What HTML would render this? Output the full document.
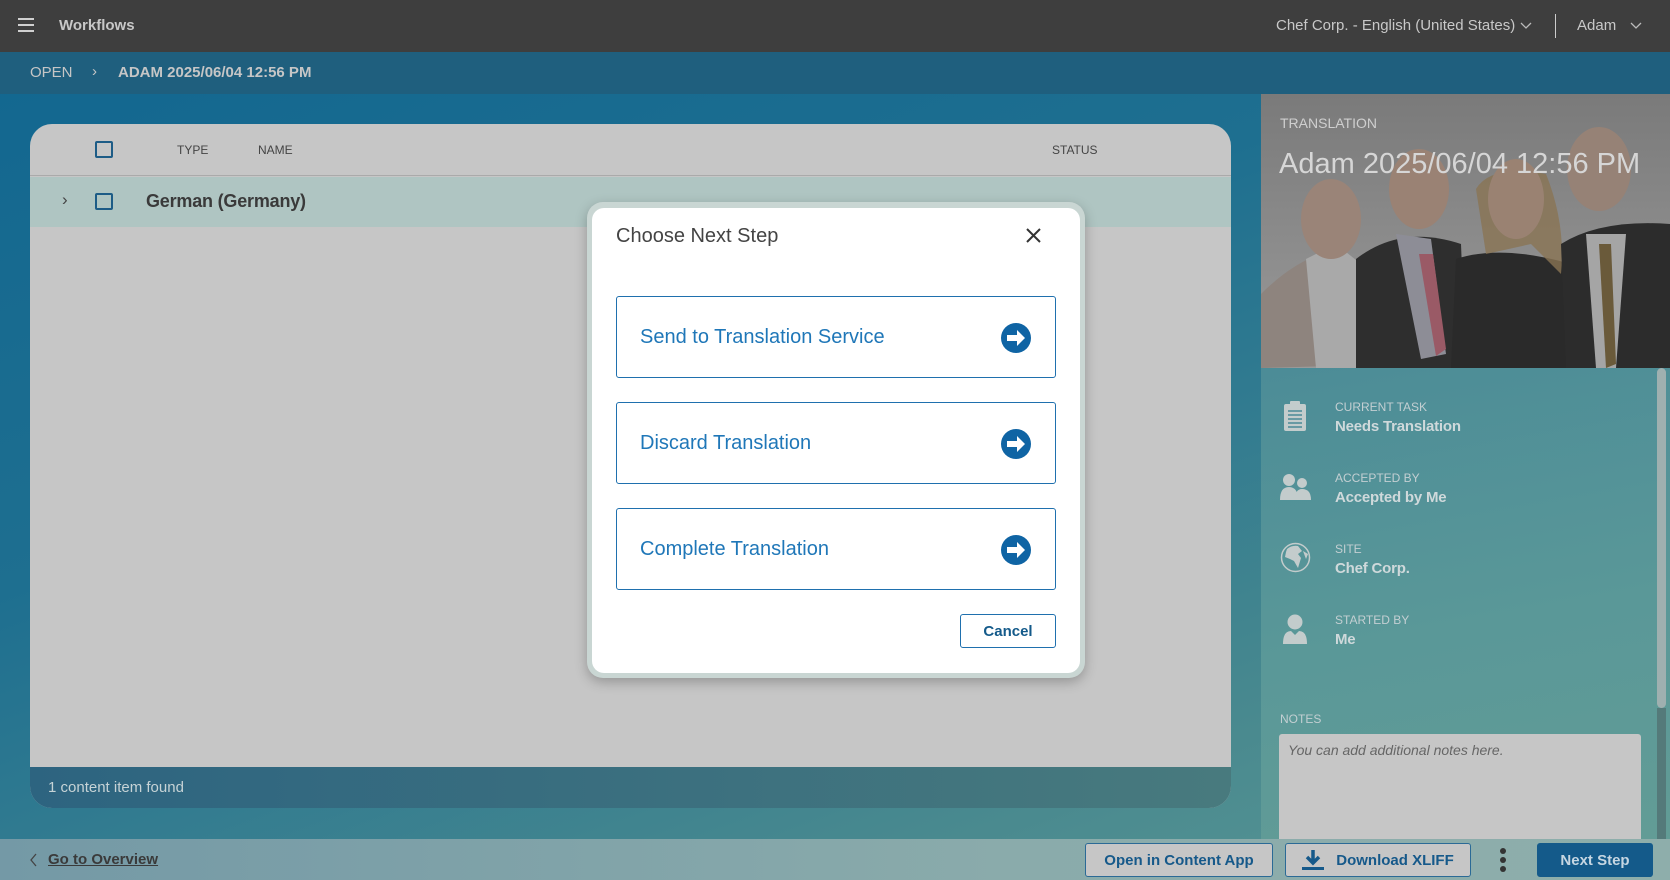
<!DOCTYPE html>
<html><head><meta charset="utf-8"><style>
*{box-sizing:border-box;margin:0;padding:0}
body{width:1670px;height:880px;overflow:hidden;font-family:"Liberation Sans",sans-serif;position:relative;background:linear-gradient(160deg,#116690 0%,#1e6f90 40%,#4a8a8f 80%,#5a9896 100%)}
.abs{position:absolute}
.top{left:0;top:0;width:1670px;height:52px;background:#3e3e3e;color:#c8c8c8}
.bc{left:0;top:52px;width:1670px;height:42px;background:#1f5f7e;color:#c6c6c6;font-size:15px}
.card{left:30px;top:124px;width:1201px;height:684px;background:#c6c6c6;border-radius:22px 22px 22px 22px;overflow:hidden}
.cb{width:18px;height:17px;border:2px solid #1d5c86;border-radius:2px;position:absolute}
.side{left:1261px;top:94px;width:409px;height:745px;background:linear-gradient(170deg,#3f8196,#5a9898 70%,#629c96)}
.lab{font-size:12px;color:#c3cfd2;position:absolute;left:74px}
.val{font-size:15px;color:#cfd9db;font-weight:bold;position:absolute;left:74px;letter-spacing:-.2px}
.bot{left:0;top:839px;width:1670px;height:41px;background:linear-gradient(90deg,#7499a6,#8aabab 60%,#8eaeab)}
.btn{position:absolute;top:4px;height:34px;border:1.5px solid #2b6a96;border-radius:3px;background:#c6c6c6;color:#16598a;font-weight:bold;font-size:15px;display:flex;align-items:center;justify-content:center}
.modal{left:587px;top:202px;width:498px;height:476px;background:#c9d6d3;border-radius:16px;box-shadow:0 4px 12px rgba(0,0,0,.25)}
.mi{position:absolute;left:5px;top:6px;width:488px;height:465px;background:#fff;border-radius:12px}
.opt{position:absolute;left:24px;width:440px;height:82px;border:1.5px solid #1f70ae;border-radius:3px;color:#1f77b8;font-size:20px;display:flex;align-items:center;padding-left:23px}
.opt svg{position:absolute;right:24px;top:26px}
</style></head><body>
<div class="abs top">
 <div class="abs" style="left:18px;top:18px;width:16px;height:2px;background:#d0d0d0;box-shadow:0 6px 0 #d0d0d0,0 12px 0 #d0d0d0"></div>
 <div class="abs" style="left:59px;top:17px;font-size:15px;font-weight:bold">Workflows</div>
 <div class="abs" style="left:1276px;top:17px;font-size:15px">Chef Corp. - English (United States)</div>
 <svg class="abs" style="left:1520px;top:22px" width="12" height="8"><path d="M1 1l5 5 5-5" stroke="#bbb" fill="none" stroke-width="1.3"/></svg>
 <div class="abs" style="left:1555px;top:14px;width:1px;height:24px;background:#ccc"></div>
 <div class="abs" style="left:1577px;top:17px;font-size:15px">Adam</div>
 <svg class="abs" style="left:1630px;top:22px" width="12" height="8"><path d="M1 1l5 5 5-5" stroke="#bbb" fill="none" stroke-width="1.3"/></svg>
</div>
<div class="abs bc">
 <div class="abs" style="left:30px;top:12px">OPEN</div>
 <div class="abs" style="left:92px;top:11px">›</div>
 <div class="abs" style="left:118px;top:12px;font-weight:bold">ADAM 2025/06/04 12:56 PM</div>
</div>
<div class="abs card">
 <div class="abs" style="left:0;top:0;width:1201px;height:52px;border-bottom:1px solid #aaa"></div>
 <div class="cb" style="left:65px;top:17px"></div>
 <div class="abs" style="left:147px;top:19px;font-size:12px;color:#444">TYPE</div>
 <div class="abs" style="left:228px;top:19px;font-size:12px;color:#444">NAME</div>
 <div class="abs" style="left:1022px;top:19px;font-size:12px;color:#444">STATUS</div>
 <div class="abs" style="left:0;top:53px;width:1201px;height:50px;background:#afc5c2"></div>
 <div class="abs" style="left:32px;top:66px;font-size:17px;color:#444">›</div>
 <div class="cb" style="left:65px;top:69px"></div>
 <div class="abs" style="left:116px;top:67px;font-size:18px;color:#3a3a3a;font-weight:bold;letter-spacing:-.2px">German (Germany)</div>
 <div class="abs" style="left:0;top:643px;width:1201px;height:41px;background:linear-gradient(90deg,#2d6480,#487a7e)"></div>
 <div class="abs" style="left:18px;top:655px;font-size:15px;color:#c6d3d6">1 content item found</div>
</div>
<div class="abs side">
 <svg class="abs" style="left:0;top:0" width="409" height="274">
  <defs><linearGradient id="g" x1="0" y1="0" x2="0" y2="1"><stop offset="0" stop-color="#7a7a7a"/><stop offset="1" stop-color="#9a9a9a"/></linearGradient></defs>
  <rect width="409" height="274" fill="url(#g)"/>
  <path d="M0 200 Q30 170 60 160 L90 170 Q120 180 140 270 L0 274Z" fill="#8e847e"/>
  <path d="M45 165 L75 150 L100 170 L95 274 L55 274Z" fill="#a9a9a9"/>
  <ellipse cx="70" cy="125" rx="30" ry="40" fill="#9a8478"/>
  <path d="M95 165 Q140 130 200 150 L205 274 L95 274Z" fill="#2e2e2e"/>
  <path d="M135 140 L170 145 L185 260 L160 265Z" fill="#8d8d96"/>
  <path d="M158 160 L172 160 L185 255 L175 262Z" fill="#9a5a66"/>
  <ellipse cx="158" cy="95" rx="30" ry="40" fill="#9a8274"/>
  <path d="M195 165 Q240 150 310 170 L330 274 L190 274Z" fill="#2a2a2a"/>
  <path d="M215 95 Q230 70 285 80 Q305 130 300 180 L270 150 L225 160Z" fill="#8a7454" opacity=".8"/>
  <ellipse cx="255" cy="105" rx="28" ry="40" fill="#9a8272"/>
  <path d="M300 150 Q340 125 409 130 L409 274 L305 274Z" fill="#2c2c2c"/>
  <path d="M325 140 L365 140 L355 274 L335 274Z" fill="#a5a5a5"/>
  <path d="M338 150 L350 150 L355 270 L345 274Z" fill="#6a5a3a"/>
  <ellipse cx="338" cy="75" rx="32" ry="42" fill="#968276"/>
 </svg>
 <div class="abs" style="left:19px;top:21px;font-size:14px;color:#cfcfcf">TRANSLATION</div>
 <div class="abs" style="left:18px;top:54px;font-size:29px;color:#d6d6d6">Adam 2025/06/04 12:56 PM</div>
 <div class="abs" style="left:396px;top:274px;width:9px;height:340px;background:#9fb0b0;border-radius:5px"></div>
 <div class="abs" style="left:396px;top:614px;width:9px;height:131px;background:#547a7a"></div>
 <svg class="abs" style="left:22px;top:307px" width="24" height="31"><rect x="1" y="3" width="22" height="27" rx="2" fill="#c3cccc"/><rect x="7" y="0" width="10" height="5" rx="1" fill="#c3cccc"/><g stroke="#4a8a96" stroke-width="1.6"><path d="M5 10h14M5 14h14M5 18h14M5 22h14M5 26h14"/></g></svg>
 <div class="lab" style="top:306px">CURRENT TASK</div><div class="val" style="top:324px">Needs Translation</div>
 <svg class="abs" style="left:19px;top:380px" width="32" height="26"><circle cx="9" cy="6" r="6" fill="#c3cccc"/><path d="M0 26 Q0 13 9 13 Q18 13 18 26Z" fill="#c3cccc"/><circle cx="22" cy="9" r="5" fill="#c3cccc"/><path d="M15 26 Q15 15 22 15 Q31 15 31 26Z" fill="#c3cccc"/></svg>
 <div class="lab" style="top:377px">ACCEPTED BY</div><div class="val" style="top:395px">Accepted by Me</div>
 <svg class="abs" style="left:19px;top:448px" width="31" height="31"><circle cx="15.5" cy="15.5" r="14" fill="none" stroke="#c3cccc" stroke-width="1.5"/><path d="M7 7 Q12 3 18 4 L22 9 L18 12 L21 16 L18 26 L14 19 L10 17 L5 15 L6 10Z" fill="#c3cccc"/><path d="M23 9 L28 12 L26 17Z" fill="#c3cccc"/></svg>
 <div class="lab" style="top:448px">SITE</div><div class="val" style="top:466px">Chef Corp.</div>
 <svg class="abs" style="left:22px;top:520px" width="24" height="30"><circle cx="12" cy="8" r="7.5" fill="#c3cccc"/><path d="M0 30 Q0 17 8 17 L12 21 L16 17 Q24 17 24 30Z" fill="#c3cccc"/></svg>
 <div class="lab" style="top:519px">STARTED BY</div><div class="val" style="top:537px">Me</div>
 <div class="abs" style="left:19px;top:618px;font-size:12px;color:#c3cfd2">NOTES</div>
 <div class="abs" style="left:18px;top:640px;width:362px;height:110px;background:#c6c6c6;border-radius:3px"></div>
 <div class="abs" style="left:27px;top:648px;font-size:14px;font-style:italic;color:#666">You can add additional notes here.</div>
</div>
<div class="abs bot">
 <svg class="abs" style="left:30px;top:14px" width="8" height="14"><path d="M6 1L1 7l5 6" stroke="#444" fill="none" stroke-width="1.3"/></svg>
 <div class="abs" style="left:48px;top:12px;font-size:15px;color:#3a3a3a;font-weight:bold;text-decoration:underline">Go to Overview</div>
 <div class="btn" style="left:1085px;width:188px">Open in Content App</div>
 <div class="btn" style="left:1285px;width:186px"><svg width="22" height="22" style="margin-right:12px"><path d="M11 1v12M5 8l6 6 6-6" stroke="#16598a" stroke-width="3.5" fill="none"/><rect x="0" y="18" width="22" height="3" fill="#16598a"/></svg>Download XLIFF</div>
 <div class="abs" style="left:1500px;top:9px;width:6px;height:6px;border-radius:3px;background:#333;box-shadow:0 9px 0 #333,0 18px 0 #333"></div>
 <div class="btn" style="left:1537px;width:116px;background:#145a8a;border-color:#145a8a;color:#c6d6e2">Next Step</div>
</div>
<div class="abs modal"><div class="mi">
 <div class="abs" style="left:24px;top:17px;font-size:20px;color:#444">Choose Next Step</div>
 <svg class="abs" style="left:434px;top:20px" width="15" height="15"><path d="M1 1l13 13M14 1L1 14" stroke="#333" stroke-width="2"/></svg>
 <div class="opt" style="top:88px">Send to Translation Service<svg width="30" height="30"><circle cx="15" cy="15" r="15" fill="#0f64a4"/><path d="M6 12h10V7l8 8-8 8v-5H6z" fill="#fff"/></svg></div>
 <div class="opt" style="top:194px">Discard Translation<svg width="30" height="30"><circle cx="15" cy="15" r="15" fill="#0f64a4"/><path d="M6 12h10V7l8 8-8 8v-5H6z" fill="#fff"/></svg></div>
 <div class="opt" style="top:300px">Complete Translation<svg width="30" height="30"><circle cx="15" cy="15" r="15" fill="#0f64a4"/><path d="M6 12h10V7l8 8-8 8v-5H6z" fill="#fff"/></svg></div>
 <div class="abs" style="left:368px;top:406px;width:96px;height:34px;border:1.5px solid #1f70ae;border-radius:3px;color:#145a8a;font-weight:bold;font-size:15px;display:flex;align-items:center;justify-content:center">Cancel</div>
</div></div>
</body></html>
